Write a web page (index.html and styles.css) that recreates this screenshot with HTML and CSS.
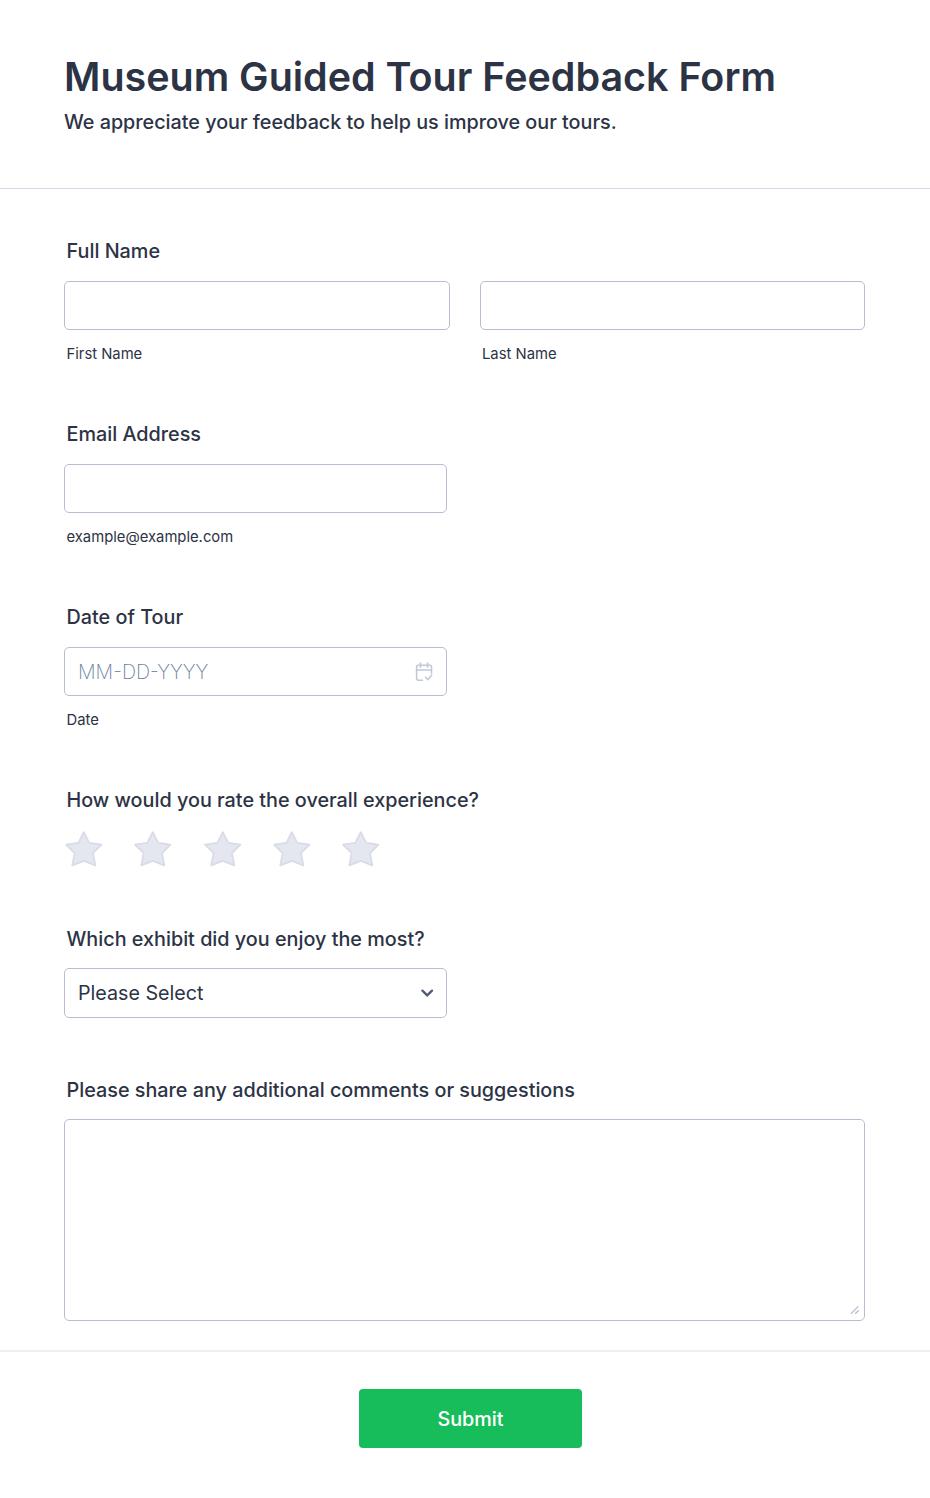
FILE: index.html
```html
<!DOCTYPE html>
<html lang="en">
<head>
  <meta charset="UTF-8">
  <meta name="viewport" content="width=device-width, initial-scale=1.0">
  <title>Museum Guided Tour Feedback Form</title>
  <link rel="stylesheet" href="styles.css">
</head>
<body>
  <svg class="symbols" aria-hidden="true">
    <symbol id="star" viewBox="0 0 40 36">
      <path d="M19.8 1.2 L25.2 11.8 L37.5 13.6 L28.9 22.2 L31.3 34.3 L19.8 29.8 L8.3 34.3 L10.7 22.2 L2.1 13.6 L14.4 11.8 Z"/>
    </symbol>
  </svg>

  <form class="form">
    <header class="form-header">
      <h1 class="title">Museum Guided Tour Feedback Form</h1>
      <p class="subtitle">We appreciate your feedback to help us improve our tours.</p>
    </header>

    <div class="questions">
      <div class="question">
        <label class="label" for="first">Full Name</label>
        <div class="name-row">
          <div class="name-col">
            <input class="field" type="text" id="first">
            <label class="sublabel" for="first">First Name</label>
          </div>
          <div class="name-col">
            <input class="field" type="text" id="last">
            <label class="sublabel" for="last">Last Name</label>
          </div>
        </div>
      </div>

      <div class="question">
        <label class="label" for="email">Email Address</label>
        <input class="field half" type="email" id="email">
        <label class="sublabel" for="email">example@example.com</label>
      </div>

      <div class="question">
        <label class="label" for="date">Date of Tour</label>
        <div class="field half date-field">
          <input class="date-input" type="text" id="date" placeholder="MM-DD-YYYY">
          <svg class="calendar" viewBox="0 0 18 20">
            <path d="M7.4 18.2H3.2a1.6 1.6 0 0 1-1.6-1.6V4.9a1.6 1.6 0 0 1 1.6-1.6h11.7a1.6 1.6 0 0 1 1.6 1.6v6.4M1.6 8h14.9M5.4 1v4.2M12.6 1v4.2M10.6 15.2l2.2 2.3 3.8-4.3"/>
          </svg>
        </div>
        <label class="sublabel" for="date">Date</label>
      </div>

      <div class="question rating">
        <span class="label">How would you rate the overall experience?</span>
        <div class="stars">
          <svg class="star"><use href="#star"/></svg>
          <svg class="star"><use href="#star"/></svg>
          <svg class="star"><use href="#star"/></svg>
          <svg class="star"><use href="#star"/></svg>
          <svg class="star"><use href="#star"/></svg>
        </div>
      </div>

      <div class="question exhibit">
        <span class="label">Which exhibit did you enjoy the most?</span>
        <div class="field half select" role="combobox" tabindex="0">
          <span>Please Select</span>
          <svg class="chevron" viewBox="0 0 14 10"><path d="M2.4 2.6l4.8 4.8 4.8-4.8"/></svg>
        </div>
      </div>

      <div class="question comments">
        <label class="label" for="comments">Please share any additional comments or suggestions</label>
        <div class="textarea-wrap">
          <textarea class="field textarea" id="comments"></textarea>
          <svg class="grip" viewBox="0 0 10 10"><path d="M1 8.8L8.2 1.4M5.2 8.8L8.8 5.2"/></svg>
        </div>
      </div>
    </div>

    <footer class="form-footer">
      <button class="submit" type="button">Submit</button>
    </footer>
  </form>
</body>
</html>
```
FILE: styles.css
```css
* {
  box-sizing: border-box;
}

body {
  margin: 0;
  background: #fff;
  color: #2c3345;
  font-family: Inter, sans-serif;
}

.symbols {
  display: none;
}

.form-header {
  height: 189px;
  padding: 53px 64px 0;
  border-bottom: 1px solid #d7d8e8;
}

.title {
  margin: 0;
  font-size: 39.45px;
  font-weight: 600;
  line-height: 48px;
}

.subtitle {
  margin: 9px 0 0;
  font-size: 19.76px;
  font-weight: 500;
  line-height: 24px;
}

.questions {
  height: 1161px;
  padding: 50px 64px 0;
}

.question {
  display: flex;
  flex-direction: column;
  height: 183px;
}

.label {
  padding-left: 2.5px;
  margin-bottom: 18px;
  font-size: 19.79px;
  font-weight: 500;
  line-height: 24px;
}

.sublabel {
  padding-left: 2.5px;
  margin-top: 14px;
  font-size: 14.8px;
  line-height: 20px;
}

.field {
  width: 100%;
  height: 49px;
  padding: 0 13px;
  border: 1px solid #b8bdd0;
  border-radius: 5px;
  background: #fff;
  color: #2c3345;
  font-family: inherit;
  font-size: 19.7px;
}

.half {
  width: 383px;
}

.name-row {
  display: flex;
  gap: 29.6px;
  width: 801.4px;
}

.name-col {
  display: flex;
  flex: 1;
  flex-direction: column;
}

.date-field,
.select {
  display: flex;
  align-items: center;
  justify-content: space-between;
}

.date-input {
  width: 300px;
  padding: 0;
  border: none;
  outline: none;
  color: inherit;
  font: inherit;
  font-size: 19.6px;
  font-weight: 200;
}

.date-input::placeholder {
  color: #6a819f;
}

.calendar {
  width: 18px;
  height: 20px;
  fill: none;
  stroke: #c3c8d8;
  stroke-width: 1.6;
  stroke-linecap: round;
}

.rating {
  height: 139px;
}

.rating .label {
  margin-bottom: 19px;
}

.stars {
  display: flex;
  gap: 29.3px;
}

.star {
  width: 40px;
  height: 36px;
  fill: #e4e7f0;
  stroke: #d9dce7;
  stroke-width: 1.8;
  stroke-linejoin: round;
}

.exhibit {
  height: 151px;
}

.exhibit .label,
.comments .label {
  margin-bottom: 17px;
}

.select {
  height: 50px;
  padding-right: 12px;
}

.chevron {
  width: 14px;
  height: 10px;
  fill: none;
  stroke: #4f5b73;
  stroke-width: 2.3;
  stroke-linecap: round;
}

.comments {
  height: auto;
}

.textarea-wrap {
  position: relative;
  width: 801px;
  height: 202px;
}

.textarea {
  display: block;
  height: 100%;
  resize: none;
}

.grip {
  position: absolute;
  right: 5px;
  bottom: 6px;
  width: 10px;
  height: 10px;
  fill: none;
  stroke: #bcc1d2;
  stroke-width: 1.3;
}

.form-footer {
  display: flex;
  justify-content: center;
  height: 148px;
  padding: 36.6px 0 0 11px;
  border-top: 2px solid #eeeef5;
}

.submit {
  width: 222.6px;
  height: 59.4px;
  padding: 1px 0 0;
  border: none;
  border-radius: 4px;
  background: #18bd5b;
  color: #fff;
  font-family: inherit;
  font-size: 19.76px;
  font-weight: 500;
}
```
